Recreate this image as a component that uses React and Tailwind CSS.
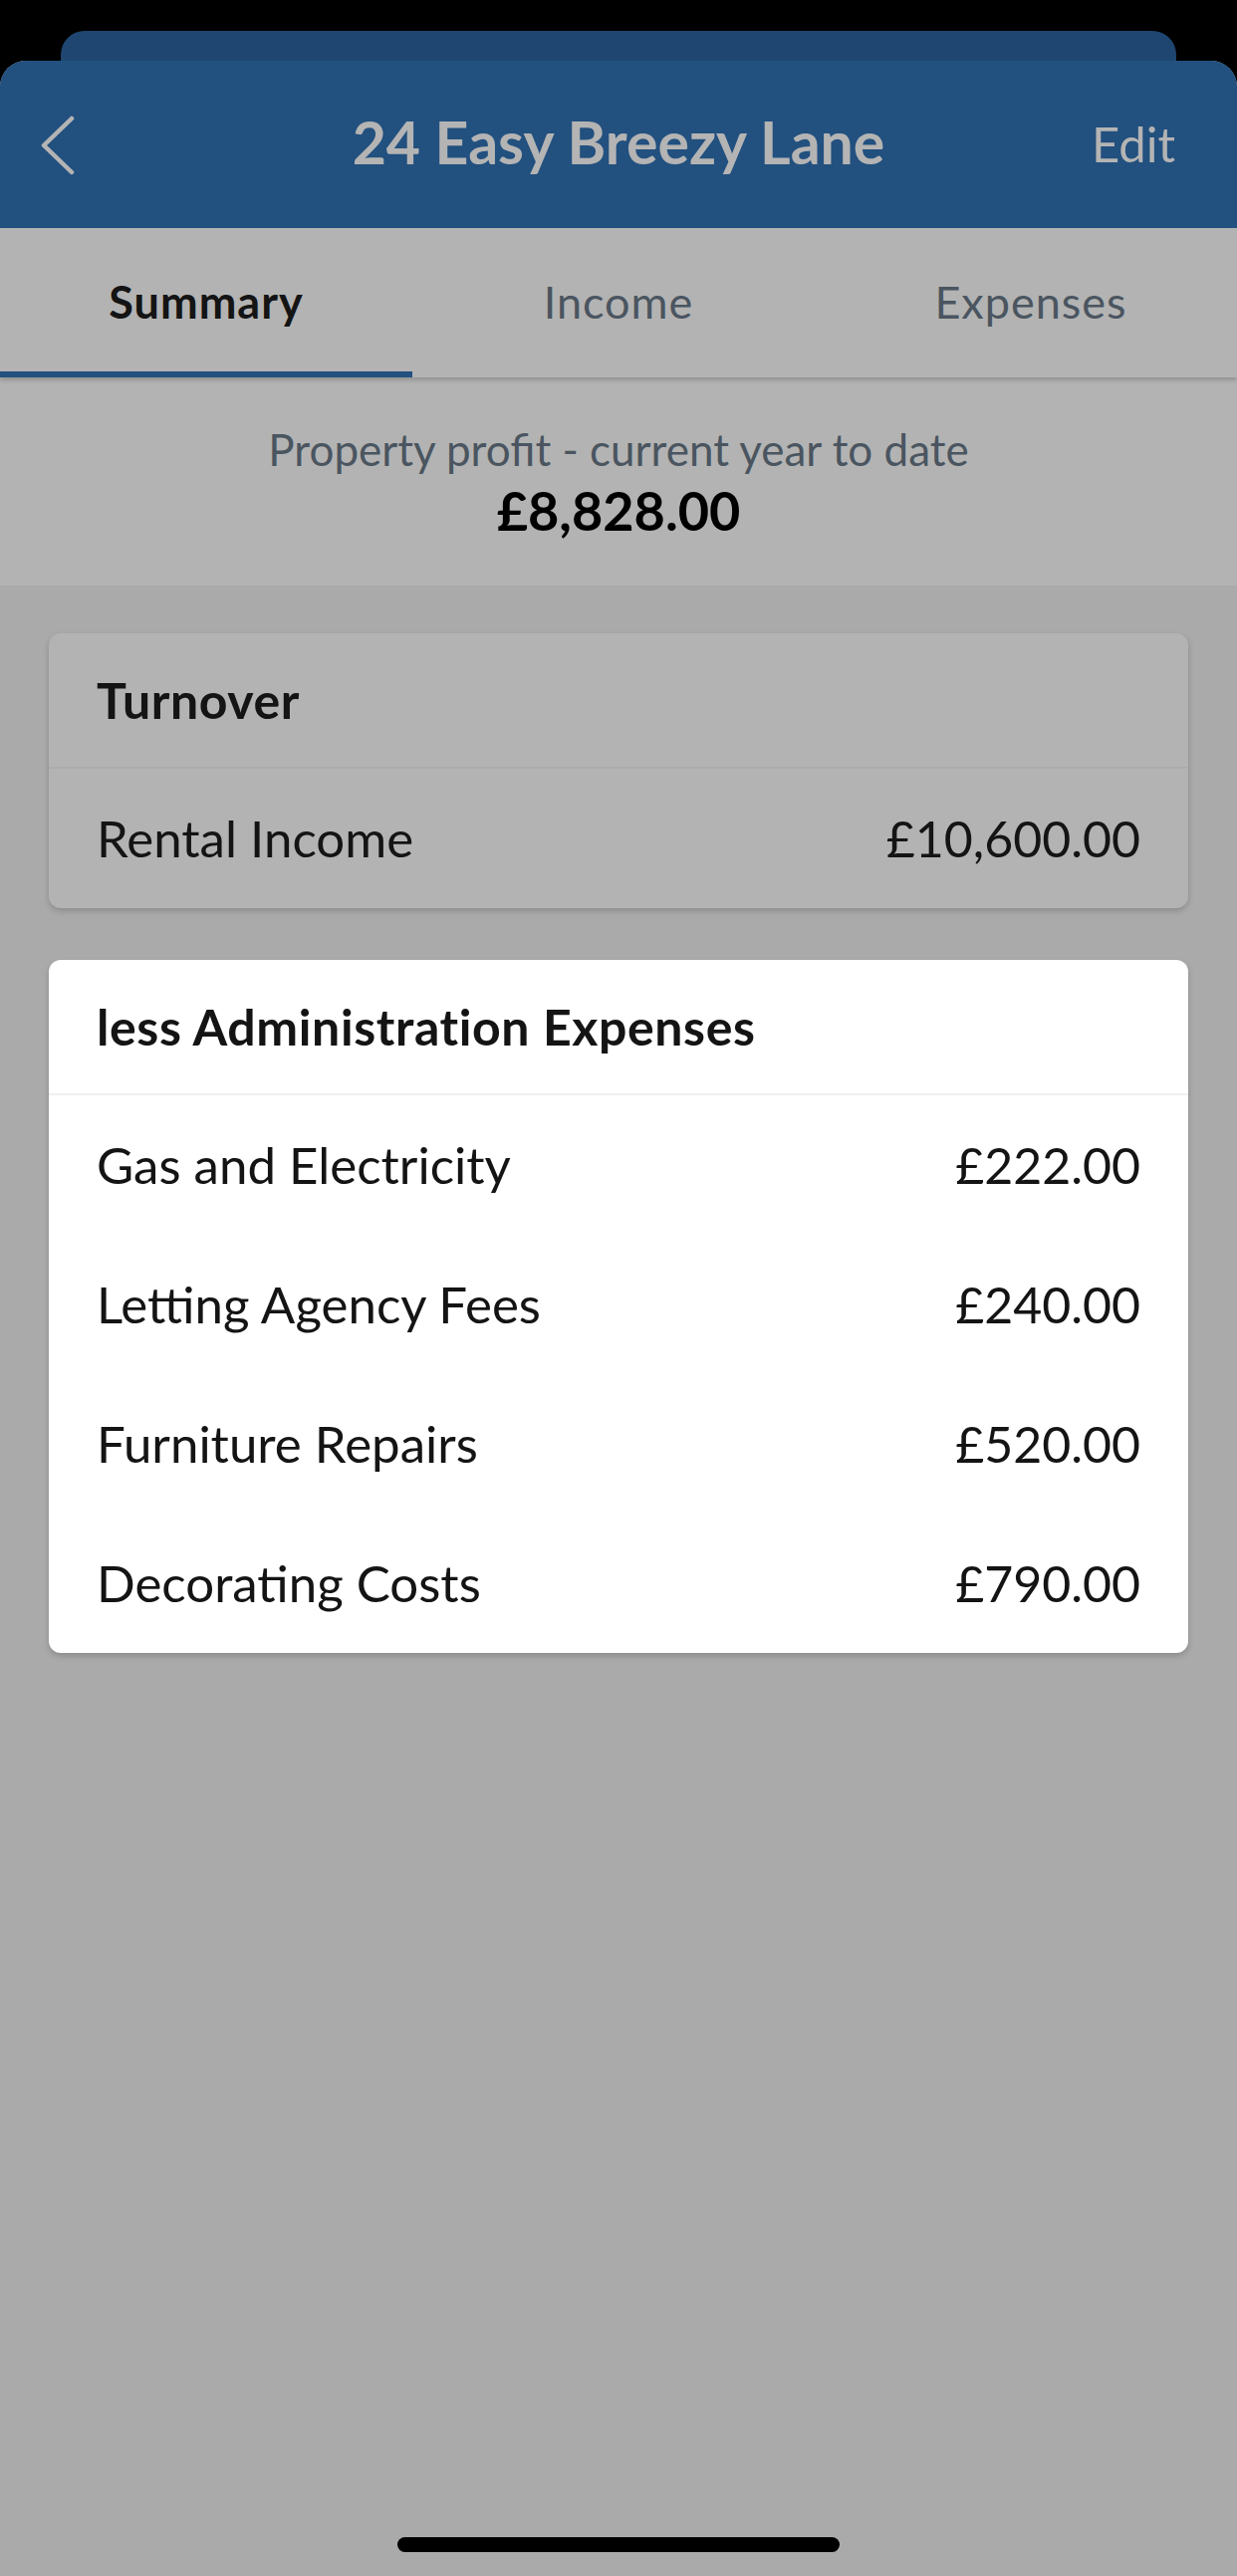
import React from 'react';

const font = { fontFamily: 'Lato, "Open Sans", sans-serif' };

const turnover = [{ label: 'Rental Income', amount: '£10,600.00' }];

const adminExpenses = [
  { label: 'Gas and Electricity', amount: '£222.00' },
  { label: 'Letting Agency Fees', amount: '£240.00' },
  { label: 'Furniture Repairs', amount: '£520.00' },
  { label: 'Decorating Costs', amount: '£790.00' },
];

const Card = ({ title, rows, highlighted }) => (
  <div
    className={`rounded-xl shadow-[0_3px_6px_rgba(0,0,0,0.18)] overflow-hidden ${
      highlighted ? 'bg-white' : 'bg-[#b3b3b3]'
    }`}
  >
    <div
      className={`h-[136px] flex items-center px-[48px] border-b-2 ${
        highlighted ? 'border-[#f0f0f0]' : 'border-[#acacac]'
      }`}
    >
      <span className="text-[50px] font-bold text-[#141414] tracking-[0.6px]">{title}</span>
    </div>
    {rows.map((r) => (
      <div key={r.label} className="h-[140px] flex items-center justify-between px-[48px]">
        <span className="text-[51px] text-[#141414]">{r.label}</span>
        <span className="text-[50px] text-[#141414]">{r.amount}</span>
      </div>
    ))}
  </div>
);

const App = () => {
  return (
    <div className="w-[1242px] h-[2587px] bg-black flex flex-col" style={font}>
      {/* sheet behind */}
      <div className="pt-[31px]">
        <div className="mx-[61px] h-[30px] bg-[#1e4670] rounded-t-[24px]" />
      </div>

      {/* front sheet */}
      <div className="flex-1 bg-[#aaaaaa] rounded-t-[26px] overflow-hidden flex flex-col">
        <div className="h-[168px] bg-[#22507f] relative flex items-center justify-between px-[40px]">
          <svg width="36" height="60" viewBox="0 0 36 60" fill="none" className="mt-[2px]">
            <polyline
              points="32,3 4,30 32,57"
              stroke="#b4b4b4"
              strokeWidth="4.5"
              strokeLinecap="round"
              strokeLinejoin="round"
            />
          </svg>
          <div className="absolute inset-0 flex items-center justify-center pointer-events-none">
            <span className="text-[59px] font-bold text-[#b4b4b4] mb-[4px]">24 Easy Breezy Lane</span>
          </div>
          <span className="text-[49px] text-[#b4b4b4] mr-[22px]">Edit</span>
        </div>

        {/* tabs */}
        <div className="h-[150px] bg-[#b3b3b3] grid grid-cols-3 relative z-10 shadow-[0_3px_4px_rgba(0,0,0,0.18)]">
          {['Summary', 'Income', 'Expenses'].map((t, i) => (
            <div key={t} className="relative flex items-center justify-center">
              <span
                className={`text-[45px] tracking-[1px] ${
                  i === 0 ? 'font-bold text-[#141414]' : 'text-[#4a5560]'
                }`}
              >
                {t}
              </span>
              {i === 0 && <div className="absolute left-0 right-0 bottom-0 h-[6px] bg-[#22507f]" />}
            </div>
          ))}
        </div>

        {/* profit */}
        <div className="h-[209px] bg-[#b3b3b3] flex flex-col items-center justify-center">
          <span className="text-[44px] text-[#4a5560] leading-[58px]">Property profit - current year to date</span>
          <span className="text-[54px] font-bold text-black leading-[66px]">£8,828.00</span>
        </div>

        <div className="px-[49px] pt-[48px] flex flex-col gap-[52px]">
          <Card title="Turnover" rows={turnover} />
          <Card title="less Administration Expenses" rows={adminExpenses} highlighted />
        </div>

        <div className="flex-1" />
        <div className="flex justify-center pb-[24px]">
          <div className="w-[444px] h-[15px] bg-black rounded-full" />
        </div>
      </div>
    </div>
  );
};

export default App;
